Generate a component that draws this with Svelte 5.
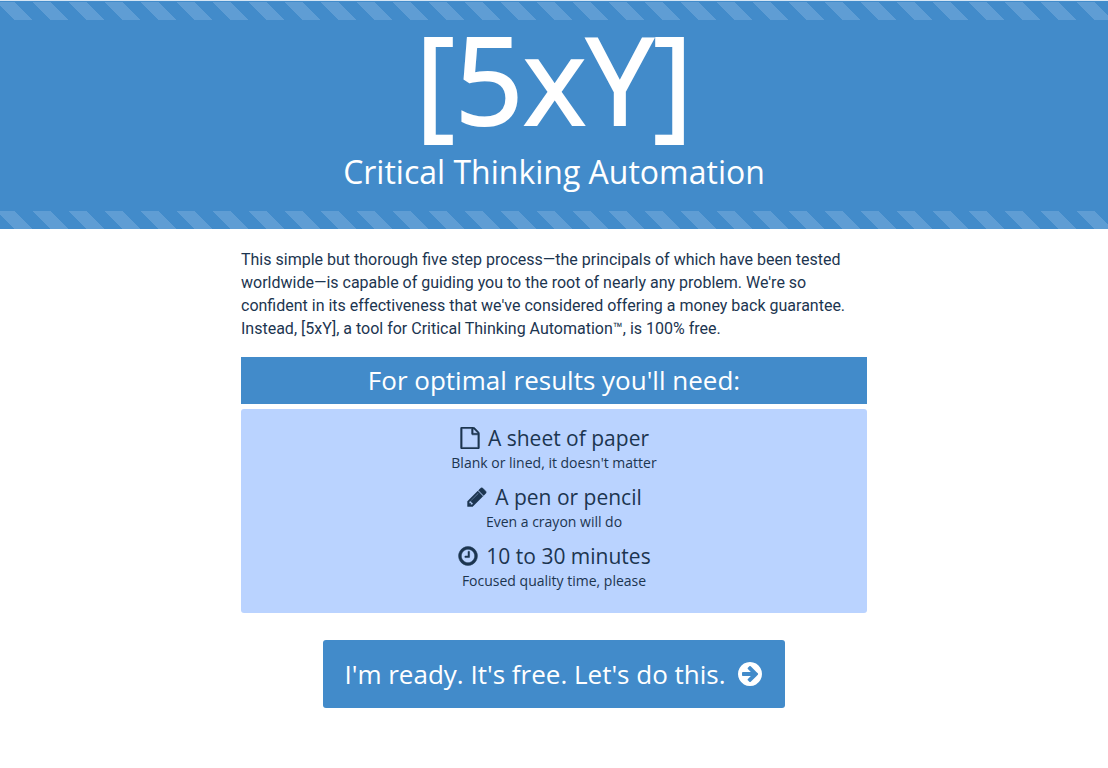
<script>
  const paths = {
    file: 'M1596 380q28 28 48 76t20 88v1152q0 40-28 68t-68 28h-1344q-40 0-68-28t-28-68v-1600q0-40 28-68t68-28h896q40 0 88 20t76 48zm-444-244v376h376q-10-29-22-41l-313-313q-12-12-41-22zm384 1528v-1024h-416q-40 0-68-28t-28-68v-416h-768v1536h1280z',
    pencil: 'M491 1536l91-91-235-235-91 91v107h128v128h107zm523-928q0-22-22-22-10 0-17 7l-542 542q-7 7-7 17 0 22 22 22 10 0 17-7l542-542q7-7 7-17zm-54-192l416 416-832 832h-416v-416zm683 96q0 53-37 90l-166 166-416-416 166-165q36-38 90-38 53 0 91 38l235 234q37 39 37 91z',
    clock: 'M1024 544v448q0 14-9 23t-23 9h-320q-14 0-23-9t-9-23v-64q0-14 9-23t23-9h224v-352q0-14 9-23t23-9h64q14 0 23 9t9 23zm416 352q0-148-73-273t-198-198-273-73-273 73-198 198-73 273 73 273 198 198 273 73 273-73 198-198 73-273zm224 0q0 209-103 385.500t-279.500 279.500-385.500 103-385.500-103-279.500-279.500-103-385.500 103-385.500 279.500-279.500 385.500-103 385.500 103 279.500 279.500 103 385.500z',
    arrow: 'M1413 896q0-27-18-45l-91-91-362-362q-18-18-45-18t-45 18l-91 91q-18 18-18 45t18 45l189 189h-502q-26 0-45 19t-19 45v128q0 26 19 45t45 19h502l-189 189q-18 18-18 45t18 45l91 91q18 18 45 18t45-18l362-362 91-91q18-18 18-45zm251 0q0 209-103 385.500t-279.500 279.500-385.500 103-385.500-103-279.500-279.500-103-385.500 103-385.500 279.500-279.500 385.500-103 385.500 103 279.500 279.500 103 385.500z'
  };
  const needs = [
    { icon: 'file', title: 'A sheet of paper', note: "Blank or lined, it doesn't matter" },
    { icon: 'pencil', title: 'A pen or pencil', note: 'Even a crayon will do' },
    { icon: 'clock', title: '10 to 30 minutes', note: 'Focused quality time, please' }
  ];
</script>

{#snippet glyph(name)}
  <svg class="icon" viewBox="0 0 1792 1792" aria-hidden="true"><path d={paths[name]} /></svg>
{/snippet}

<header>
  <h1>[5xY]</h1>
  <p class="tagline">Critical Thinking Automation</p>
</header>

<main>
  <p class="intro">
    This simple but thorough five step process—the principals of which have been tested
    worldwide—is capable of guiding you to the root of nearly any problem. We're so confident in
    its effectiveness that we've considered offering a money back guarantee. Instead, [5xY], a
    tool for Critical Thinking Automation™, is 100% free.
  </p>

  <h2>For optimal results you'll need:</h2>
  <ul>
    {#each needs as need}
      <li>
        <h3>{@render glyph(need.icon)}{need.title}</h3>
        <p>{need.note}</p>
      </li>
    {/each}
  </ul>

  <button type="button">I'm ready. It's free. Let's do this.{@render glyph('arrow')}</button>
</main>

<style>
  :global(body) {
    margin: 0;
    background: #fff;
    color: #1c3550;
    font-family: 'Open Sans', 'Noto Sans', sans-serif;
  }

  h1, h2, h3, p, ul {
    margin: 0;
    padding: 0;
    font-weight: 400;
  }

  header {
    --bar: linear-gradient(45deg, #5f9dd4 25%, #428bca 25%, #428bca 50%, #5f9dd4 50%, #5f9dd4 75%, #428bca 75%);
    border-top: 1px solid #d5e5f3;
    background: #428bca;
    color: #fff;
    text-align: center;
  }

  header::before,
  header::after {
    content: '';
    display: block;
    height: 18px;
    margin-top: 1px;
    background: var(--bar) center top / 36px 36px;
  }

  h1 {
    padding-bottom: 14px;
    font-size: 120px;
    line-height: 118px;
    -webkit-text-stroke: 2px currentColor;
  }

  .tagline {
    padding-bottom: 18px;
    font-size: 32px;
    line-height: 40px;
  }

  main {
    display: flex;
    flex-direction: column;
    max-width: 626px;
    margin: 0 auto;
    padding: 19px 16px 60px;
  }

  .intro {
    font-family: Roboto, 'Open Sans', sans-serif;
    font-size: 16px;
    line-height: 23px;
  }

  h2 {
    margin-top: 17px;
    background: #428bca;
    color: #fff;
    font-size: 26px;
    line-height: 47px;
    text-align: center;
  }

  ul {
    display: flex;
    flex-direction: column;
    gap: 9px;
    margin-top: 5px;
    padding: 15px 16px 21px;
    border-radius: 3px;
    background: #bad3ff;
    list-style: none;
    text-align: center;
  }

  h3 {
    display: flex;
    align-items: center;
    justify-content: center;
    gap: 7px;
    font-size: 21px;
    line-height: 28px;
  }

  li p {
    font-size: 14px;
    line-height: 22px;
  }

  .icon {
    width: 22px;
    height: 22px;
    fill: currentColor;
  }

  h3 .icon {
    stroke: currentColor;
    stroke-width: 40px;
  }

  button {
    display: flex;
    align-items: center;
    align-self: center;
    gap: 10px;
    margin-top: 27px;
    padding: 14px 21px;
    border: 0;
    border-radius: 3px;
    background: #428bca;
    color: #fff;
    font-family: inherit;
    font-size: 26px;
    line-height: 40px;
    cursor: pointer;
  }

  button .icon {
    width: 28px;
    height: 28px;
  }
</style>
